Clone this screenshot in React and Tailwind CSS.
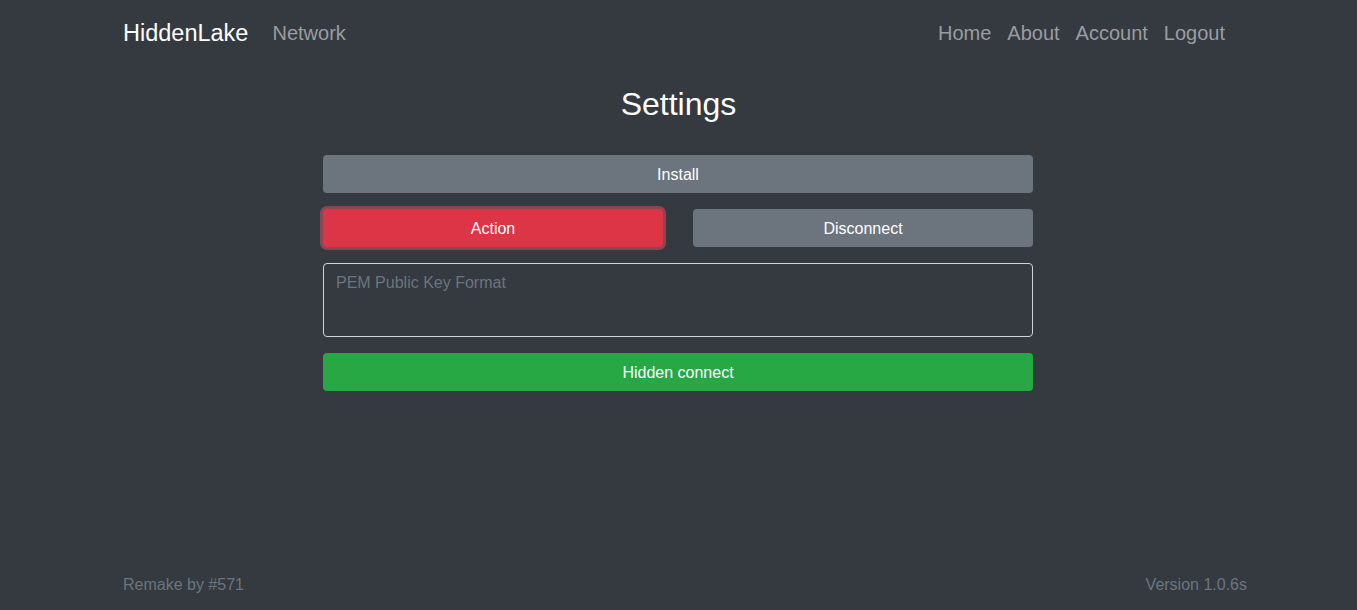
import React from 'react'

function Navbar() {
  return (
    <nav className="h-[66px] w-[1140px] ml-[108px] px-[15px] flex items-center justify-between">
      <div className="flex items-center">
        <span className="text-white text-[23.5px] leading-[30px] mr-[16px]">HiddenLake</span>
        <a className="px-2 text-[20px] leading-[30px] text-[#9a9da0]">Network</a>
      </div>
      <div className="flex items-center">
        {['Home', 'About', 'Account', 'Logout'].map((item) => (
          <a key={item} className="px-2 text-[20px] leading-[30px] text-[#9a9da0]">{item}</a>
        ))}
      </div>
    </nav>
  )
}

function App() {
  return (
    <div className="min-h-screen bg-[#343a40] flex flex-col" style={{ fontFamily: '"Liberation Sans", Arial, sans-serif' }}>
      <Navbar />
      <main className="flex-1 flex flex-col items-center">
        <h2 className="mt-[19px] mb-[32px] text-[32px] leading-[38px] text-white">Settings</h2>
        <div className="w-[710px] mr-[1px] flex flex-col gap-4">
          <button className="h-[38px] pt-px w-full rounded bg-[#6c757d] text-white text-base">Install</button>
          <div className="flex gap-[30px]">
            <button className="h-[38px] pt-px flex-1 rounded bg-[#dc3545] text-white text-base ring-[3px] ring-[rgba(225,83,97,0.5)]">Action</button>
            <button className="h-[38px] pt-px flex-1 rounded bg-[#6c757d] text-white text-base">Disconnect</button>
          </div>
          <textarea
            className="h-[74px] w-full rounded border border-[#ced4da] bg-transparent px-3 pt-[7px] pb-[5px] text-base leading-6 text-white placeholder:text-[#6c757d] resize-none outline-none"
            placeholder="PEM Public Key Format"
          />
          <button className="h-[38px] pt-px w-full rounded bg-[#28a745] text-white text-base">Hidden connect</button>
        </div>
      </main>
      <footer className="w-[1140px] ml-[108px] pl-[15px] pr-[1px] pb-[13px] flex justify-between text-base leading-6 text-[#6c757d]">
        <span>Remake by #571</span>
        <span>Version 1.0.6s</span>
      </footer>
    </div>
  )
}

export default App
